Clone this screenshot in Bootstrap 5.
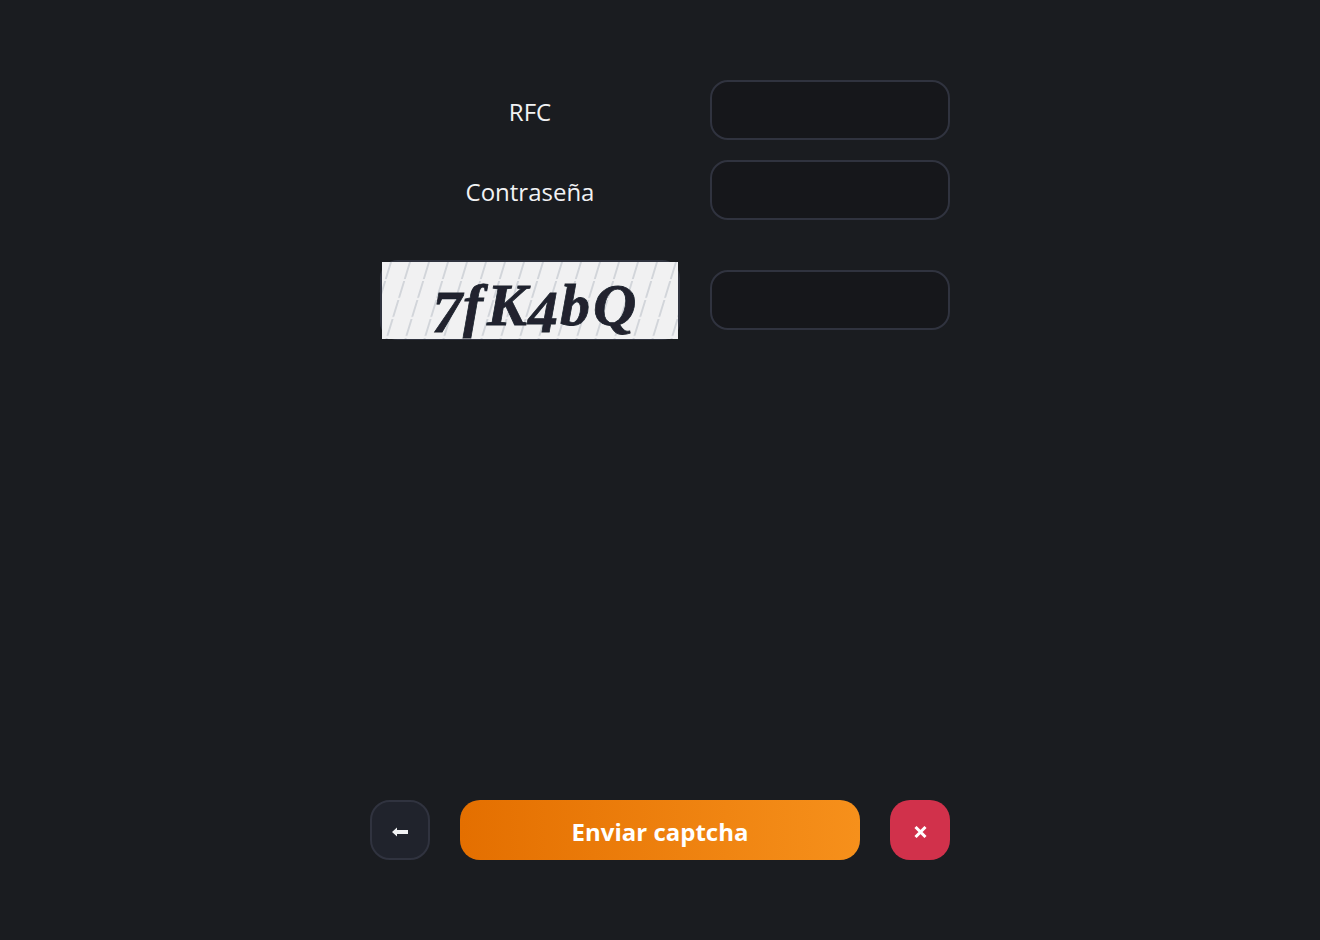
<!DOCTYPE html>
<html lang="es">
<head>
<meta charset="utf-8">
<title>Captcha</title>
<link href="https://cdn.jsdelivr.net/npm/bootstrap@5.3.0/dist/css/bootstrap.min.css" rel="stylesheet">
<style>
html,body{height:100%}
body{background:#1a1c20;color:#f1f2f4;font-family:"Open Sans","Noto Sans",sans-serif;overflow:hidden}
.page-wrap{width:580px;height:940px;padding:80px 0;margin-left:370px}
.form-line{gap:20px}
.label-cell{width:320px;font-size:24px;line-height:36px;padding-top:4px}
.captcha-cell{width:320px}
.field-box{width:240px;height:60px;background:#16171b;border:2px solid #30333f;border-radius:18px;color:#f1f2f4}
.field-box:focus{background:#16171b;border-color:#30333f;box-shadow:none;color:#f1f2f4}
.line-two{margin-top:20px}
.line-three{margin-top:40px}
.captcha-frame{width:300px;height:80px;border:2px solid #30333f;border-radius:18px}
.captcha-pic{display:block;width:296px;height:77px;overflow:visible}
.captcha-word{font-family:"Liberation Serif",serif;font-style:italic;font-weight:700;font-size:60px;fill:#20242f;stroke:#20242f;stroke-width:.8px}
.square-btn,.send-btn{height:60px;border-radius:20px;padding:0}
.square-btn{width:60px}
.back-btn{background:#20232c;border:2px solid #30333f}
.close-btn{background:#d1314b;border:0}
.send-btn{width:400px;border:0;color:#fff;font-weight:700;font-size:24px;line-height:1;padding-top:4px;background:linear-gradient(90deg,#e46f00,#f6901b)}
.send-btn:hover,.send-btn:active{color:#fff}
.action-bar{gap:30px}
.icon-shift{margin-top:3px}
</style>
</head>
<body>
<main class="page-wrap d-flex flex-column">
  <div class="d-flex form-line align-items-center">
    <label class="label-cell text-center" for="rfc">RFC</label>
    <input id="rfc" class="field-box form-control" type="text">
  </div>
  <div class="d-flex form-line align-items-center line-two">
    <label class="label-cell text-center" for="pass">Contraseña</label>
    <input id="pass" class="field-box form-control" type="password">
  </div>
  <div class="d-flex form-line align-items-center line-three">
    <div class="captcha-cell d-flex justify-content-center">
      <div class="captcha-frame">
        <svg class="captcha-pic" viewBox="0 0 296 77" role="img" aria-label="captcha">
          <defs>
            <pattern id="hatch" width="19" height="77" patternUnits="userSpaceOnUse" patternTransform="skewX(-17)">
              <line x1="9" y1="0" x2="9" y2="77" stroke="#d2d5da" stroke-width="2" stroke-dasharray="17 2"/>
            </pattern>
            <filter id="soft"><feGaussianBlur stdDeviation="0.45"/></filter>
          </defs>
          <rect width="296" height="77" fill="#f1f1f2"/>
          <rect width="296" height="77" fill="url(#hatch)"/>
          <text class="captcha-word" y="63" filter="url(#soft)"><tspan x="50" dy="7">7</tspan><tspan dy="-7" dx="1">f</tspan><tspan dx="4">K</tspan><tspan dy="7" dx="1">4</tspan><tspan dy="-7" dx="2">b</tspan><tspan dx="3">Q</tspan></text>
        </svg>
      </div>
    </div>
    <input class="field-box form-control" type="text" aria-label="captcha">
  </div>
  <div class="d-flex action-bar mt-auto">
    <button class="btn square-btn back-btn d-flex align-items-center justify-content-center" type="button" aria-label="Volver">
      <svg class="icon-shift" width="16" height="10" viewBox="0 0 16 10"><path d="M0 5 5 .5V3h11v4H5v2.5z" fill="#f1f2f4"/></svg>
    </button>
    <button class="btn send-btn" type="button">Enviar captcha</button>
    <button class="btn square-btn close-btn d-flex align-items-center justify-content-center" type="button" aria-label="Cerrar">
      <svg class="icon-shift" width="13" height="12" viewBox="0 0 13 12"><path d="M1.5 1 11.5 11M11.5 1 1.5 11" stroke="#fff" stroke-width="3"/></svg>
    </button>
  </div>
</main>
</body>
</html>
